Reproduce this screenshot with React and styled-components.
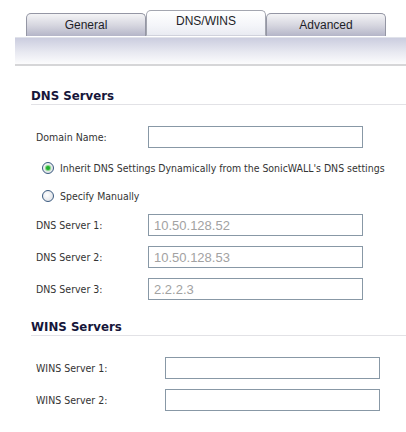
import React from 'react';
import styled, { createGlobalStyle } from 'styled-components';

const GlobalStyle = createGlobalStyle`
  body {
    margin: 0;
    background: #ffffff;
    font-family: "DejaVu Sans Condensed", "DejaVu Sans", sans-serif;
  }
`;

const Page = styled.div`
  width: 406px;
  height: 432px;
  overflow: hidden;
  background: #fff;
`;

const TabBar = styled.div`
  display: flex;
  align-items: flex-end;
  height: 36px;
  padding-left: 26px;
`;

const Tab = styled.div`
  box-sizing: border-box;
  width: 120px;
  height: ${p => (p.$active ? '26px' : '23px')};
  display: flex;
  align-items: center;
  justify-content: center;
  border: 1px solid ${p => (p.$active ? '#a4a6b0' : '#9496a4')};
  border-bottom: ${p => (p.$active ? '1px solid #d0d2dc' : 'none')};
  border-radius: 5px 5px 0 0;
  background: ${p =>
    p.$active
      ? 'linear-gradient(#ffffff, #f4f5f9 60%, #e9ebf2)'
      : 'linear-gradient(#f4f4f6, #d4d4de 55%, #b4b5c8)'};
  font-family: "Liberation Sans", Arial, sans-serif;
  font-size: 12px;
  color: #1e1e28;
  padding-bottom: ${p => (p.$active ? '4px' : '1px')};
`;

const Band = styled.div`
  margin-left: 15px;
  margin-top: 1px;
  height: 26px;
  border-top: 1px solid #e0e2ea;
  border-bottom: 2px solid #d6d6d8;
  background: linear-gradient(#cbcddf, #e8e9f1 55%, #fcfcfd);
`;

const Content = styled.div`
  padding-left: 31px;
`;

const Heading = styled.div`
  margin-top: ${p => p.$top}px;
  height: 14px;
  line-height: 14px;
  border-bottom: 1px solid #e2e2e6;
  font-family: "DejaVu Sans", sans-serif;
  font-weight: bold;
  font-size: 11.8px;
  color: #16163a;
  padding-bottom: 1px;
`;

const Row = styled.div`
  display: flex;
  align-items: center;
  height: 22px;
  margin-top: ${p => p.$top}px;
  padding-left: 5px;
`;

const Label = styled.div`
  width: ${p => p.$w}px;
  font-size: 10.5px;
  color: #333;
`;

const Input = styled.div`
  box-sizing: border-box;
  width: 215px;
  height: 22px;
  border: 1px solid #8898a6;
  background: #fff;
  display: flex;
  align-items: center;
  padding-left: 5px;
  font-family: "Liberation Sans", Arial, sans-serif;
  font-size: 13px;
  color: #a2a2a2;
`;

const RadioRow = styled.div`
  display: flex;
  align-items: center;
  height: 16px;
  margin-top: ${p => p.$top}px;
  padding-left: 11px;
  gap: 6px;
  font-size: 10.45px;
  color: #333;
`;

const Radio = styled.span`
  box-sizing: border-box;
  width: 12px;
  height: 12px;
  border-radius: 50%;
  border: 1px solid #3a5a80;
  background: radial-gradient(circle at 40% 40%, #ffffff, #e4e6ea 70%, #c8ccd4);
  display: flex;
  align-items: center;
  justify-content: center;
  &::after {
    content: '';
    display: ${p => (p.$checked ? 'block' : 'none')};
    width: 4px;
    height: 4px;
    border-radius: 50%;
    background: #22b030;
    box-shadow: 0 0 1px 1px #7ad27e;
  }
`;

export default function App() {
  return (
    <Page>
      <GlobalStyle />
      <TabBar>
        <Tab>General</Tab>
        <Tab $active>DNS/WINS</Tab>
        <Tab>Advanced</Tab>
      </TabBar>
      <Band />
      <Content>
        <Heading $top={23}>DNS Servers</Heading>
        <Row $top={21}>
          <Label $w={112}>Domain Name:</Label>
          <Input />
        </Row>
        <RadioRow $top={12}>
          <Radio $checked />
          Inherit DNS Settings Dynamically from the SonicWALL's DNS settings
        </RadioRow>
        <RadioRow $top={12}>
          <Radio />
          Specify Manually
        </RadioRow>
        <Row $top={10}>
          <Label $w={112}>DNS Server 1:</Label>
          <Input>10.50.128.52</Input>
        </Row>
        <Row $top={10}>
          <Label $w={112}>DNS Server 2:</Label>
          <Input>10.50.128.53</Input>
        </Row>
        <Row $top={10}>
          <Label $w={112}>DNS Server 3:</Label>
          <Input>2.2.2.3</Input>
        </Row>
        <Heading $top={20}>WINS Servers</Heading>
        <Row $top={21}>
          <Label $w={129}>WINS Server 1:</Label>
          <Input />
        </Row>
        <Row $top={10}>
          <Label $w={129}>WINS Server 2:</Label>
          <Input />
        </Row>
      </Content>
    </Page>
  );
}
